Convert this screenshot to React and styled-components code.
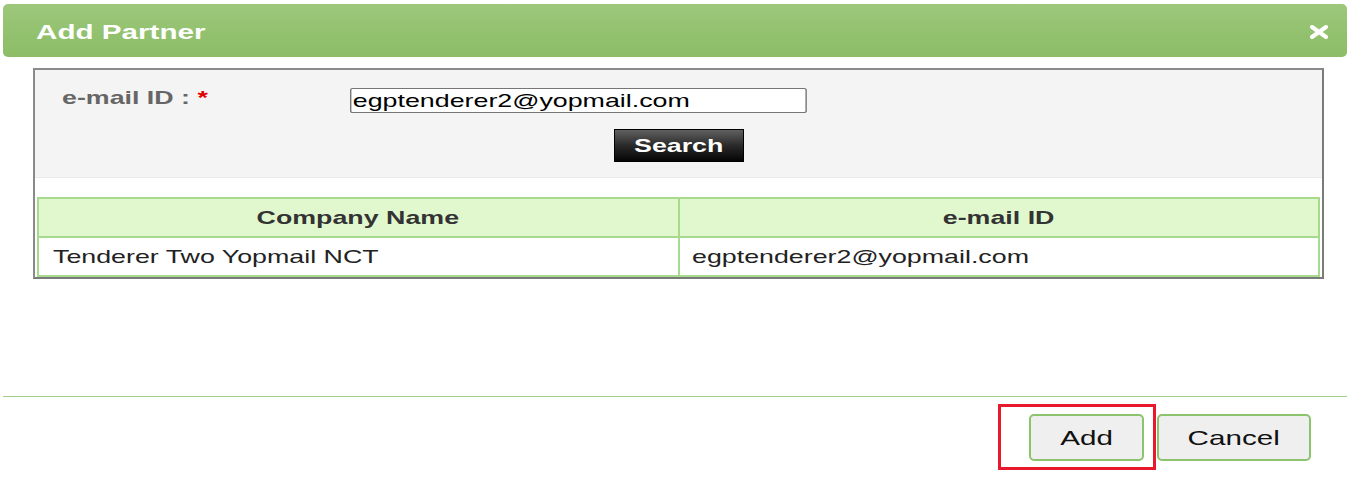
import React, { useState } from 'react';
import styled, { createGlobalStyle } from 'styled-components';

const GlobalStyle = createGlobalStyle`
  html, body {
    margin: 0;
    padding: 0;
    background: #fff;
    font-family: "Liberation Sans", Arial, sans-serif;
  }
`;

// the captured dialog is drawn wider than it is tall, so text is stretched sideways
const Wide = styled.span`
  display: inline-block;
  white-space: nowrap;
  transform: scaleX(1.41);
  transform-origin: ${p => p.$origin || 'left'} center;
`;

const Dialog = styled.div`
  width: 1347px;
  height: 482px;
  padding-top: 4px;
  box-sizing: border-box;
  display: flex;
  flex-direction: column;
  background: #fff;
`;

const TitleBar = styled.div`
  margin-left: 3px;
  height: 53px;
  border-radius: 5px;
  background: linear-gradient(180deg, #9dc87c 0%, #93c270 50%, #8cbd66 100%);
  display: flex;
  align-items: center;
  justify-content: space-between;
  padding: 2px 17px 0 33px;
  box-sizing: border-box;
`;

const Title = styled.h2`
  margin: 0;
  color: #fff;
  font-size: 21px;
  font-weight: bold;
`;

const CloseButton = styled.button`
  border: none;
  background: none;
  padding: 0;
  width: 22px;
  height: 22px;
  display: flex;
  align-items: center;
  justify-content: center;
  cursor: pointer;
`;

const Content = styled.div`
  flex: 1;
  padding: 11px 23px 0 30px;
  margin-left: 3px;
  border-bottom: 1px solid #a3cf87;
`;

const Panel = styled.div`
  border: 2px solid #7a7a7a;
  border-top-color: #8a8a8a;
  border-left-color: #8a8a8a;
  background: #fff;
`;

const FormArea = styled.div`
  background: #f4f4f4;
  border-bottom: 1px solid #e9e9e9;
  height: 108px;
  box-sizing: border-box;
  padding: 18px 0 0 27px;
`;

const FieldRow = styled.div`
  display: flex;
  align-items: flex-start;
`;

const Label = styled.label`
  width: 288px;
  color: #666;
  font-size: 19px;
  font-weight: bold;
  line-height: 20px;
`;

const Required = styled.span`
  color: #e00000;
`;

const EmailInput = styled.input`
  width: 324px;
  height: 25px;
  box-sizing: border-box;
  border: 1px solid #767676;
  border-radius: 2px;
  padding: 0 1px;
  font-family: "Liberation Sans", Arial, sans-serif;
  font-size: 19px;
  color: #000;
  background: #fff;
  transform: scaleX(1.41);
  transform-origin: left center;
`;

const SearchRow = styled.div`
  display: flex;
  justify-content: center;
  margin: 16px 0 0 -27px;
`;

const SearchButton = styled.button`
  width: 130px;
  height: 33px;
  border: 1px solid #000;
  background: linear-gradient(180deg, #606060 0%, #2a2a2a 50%, #050505 100%);
  color: #fff;
  font-family: "Liberation Sans", Arial, sans-serif;
  font-size: 19px;
  font-weight: bold;
  padding: 0;
  cursor: pointer;
`;

const Table = styled.table`
  margin: 19px 2px 0 2px;
  width: calc(100% - 4px);
  border-collapse: collapse;
  font-size: 19px;
  color: #222;
`;

const HeadCell = styled.th`
  background: #e1f8cf;
  border: 2px solid #a7da8c;
  height: 37px;
  padding: 0;
  font-weight: bold;
  color: #333;
  text-align: center;
  width: 50%;
`;

const Cell = styled.td`
  border: 2px solid #a7da8c;
  height: 37px;
  padding: 0 0 0 ${p => p.$pad}px;
  text-align: left;
`;

const Footer = styled.div`
  height: 85px;
  display: flex;
  justify-content: flex-end;
  align-items: flex-start;
  gap: 13px;
  padding: 17px 36px 0 0;
  box-sizing: border-box;
`;

const ActionButton = styled.button`
  position: relative;
  width: ${p => p.$w}px;
  height: 47px;
  border: 2px solid #8cc46e;
  border-radius: 5px;
  background: #efefef;
  font-family: "Liberation Sans", Arial, sans-serif;
  font-size: 21px;
  color: #111;
  padding: 0;
  cursor: pointer;
`;

const Highlight = styled.span`
  position: absolute;
  left: -33px;
  top: -12px;
  width: 158px;
  height: 66px;
  border: 3px solid #e8192c;
  box-sizing: border-box;
  pointer-events: none;
`;

const CloseIcon = () => (
  <svg width="20" height="14" viewBox="0 0 20 14">
    <path d="M3 2 L17 12 M17 2 L3 12" stroke="#fff" strokeWidth="4" strokeLinecap="round" />
  </svg>
);

export default function App() {
  const [email, setEmail] = useState('egptenderer2@yopmail.com');

  return (
    <>
      <GlobalStyle />
      <Dialog>
        <TitleBar>
          <Title><Wide>Add Partner</Wide></Title>
          <CloseButton aria-label="close">
            <CloseIcon />
          </CloseButton>
        </TitleBar>
        <Content>
          <Panel>
            <FormArea>
              <FieldRow>
                <Label>
                  <Wide>e-mail ID : <Required>*</Required></Wide>
                </Label>
                <EmailInput value={email} onChange={e => setEmail(e.target.value)} />
              </FieldRow>
              <SearchRow>
                <SearchButton><Wide $origin="center">Search</Wide></SearchButton>
              </SearchRow>
            </FormArea>
            <Table>
              <thead>
                <tr>
                  <HeadCell><Wide $origin="center">Company Name</Wide></HeadCell>
                  <HeadCell><Wide $origin="center">e-mail ID</Wide></HeadCell>
                </tr>
              </thead>
              <tbody>
                <tr>
                  <Cell $pad={14}><Wide>Tenderer Two Yopmail NCT</Wide></Cell>
                  <Cell $pad={12}><Wide>egptenderer2@yopmail.com</Wide></Cell>
                </tr>
              </tbody>
            </Table>
          </Panel>
        </Content>
        <Footer>
          <ActionButton $w={115}>
            <Wide $origin="center">Add</Wide>
            <Highlight />
          </ActionButton>
          <ActionButton $w={154}><Wide $origin="center">Cancel</Wide></ActionButton>
        </Footer>
      </Dialog>
    </>
  );
}
